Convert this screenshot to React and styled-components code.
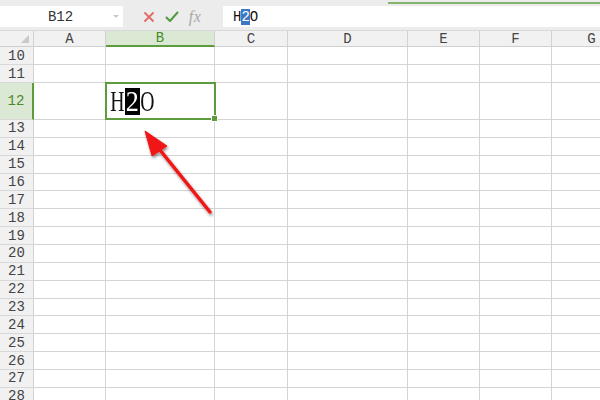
import React from "react";
import styled, { createGlobalStyle } from "styled-components";

const GlobalStyle = createGlobalStyle`
  html, body {
    margin: 0;
    padding: 0;
    background: #ffffff;
    overflow: hidden;
  }
  * {
    box-sizing: border-box;
  }
`;

const columns = [
  { key: "A", width: 72 },
  { key: "B", width: 109 },
  { key: "C", width: 73 },
  { key: "D", width: 120 },
  { key: "E", width: 72 },
  { key: "F", width: 72 },
  { key: "G", width: 80 },
];

const rows = [10, 11, 12, 13, 14, 15, 16, 17, 18, 19, 20, 21, 22, 23, 24, 25, 26, 27, 28];

const Page = styled.div`
  position: relative;
  width: 600px;
  height: 400px;
  overflow: hidden;
  font-family: "Liberation Mono", "DejaVu Sans Mono", monospace;
  background: #ffffff;
`;

const TopStrip = styled.div`
  height: 6px;
  background: #ececec;
  display: flex;
  align-items: flex-start;
  justify-content: flex-end;
`;

const TabLine = styled.div`
  width: 212px;
  height: 2px;
  margin-top: 2px;
  background: #84b56e;
`;

const FormulaBar = styled.div`
  display: flex;
  height: 21px;
  background: #ffffff;
`;

const NameBox = styled.div`
  position: relative;
  width: 123px;
  display: flex;
  align-items: center;
  justify-content: center;
  font-size: 14px;
  color: #333;
  padding-right: 2px;
`;

const DropArrow = styled.span`
  position: absolute;
  right: 4px;
  top: 9px;
  width: 0;
  height: 0;
  border-left: 3px solid transparent;
  border-right: 3px solid transparent;
  border-top: 3px solid #c8c8c8;
`;

const ToolZone = styled.div`
  width: 100px;
  background: #ececec;
  display: flex;
  align-items: center;
  justify-content: center;
  gap: 10px;
  padding-right: 2px;
`;

const Fx = styled.span`
  font-family: "Liberation Serif", serif;
  font-style: italic;
  font-size: 16px;
  color: #a8a8a8;
  letter-spacing: 0.5px;
`;

const FormulaInput = styled.div`
  flex: 1;
  display: flex;
  align-items: center;
  padding-left: 10px;
  font-size: 14px;
  color: #111;
`;

const Sel = styled.span`
  background: #3d78c6;
  color: #ffffff;
`;

const Gap = styled.div`
  height: 4px;
  background: #ececec;
  border-bottom: 1px solid #d8d8d8;
`;

const Sheet = styled.div`
  display: grid;
  grid-template-columns: 34px ${columns.map((c) => `${c.width}px`).join(" ")};
  grid-template-rows: 16px 18px 18px 37px repeat(16, 17.86px);
`;

const Corner = styled.div`
  position: relative;
  background: #f1f1f1;
  border-right: 1px solid #d2d2d2;
  border-bottom: 1px solid #cfcfcf;
  &::after {
    content: "";
    position: absolute;
    right: 4px;
    bottom: 3px;
    width: 0;
    height: 0;
    border-left: 8px solid transparent;
    border-bottom: 8px solid #c9c9c9;
  }
`;

const ColHead = styled.div`
  display: flex;
  align-items: center;
  justify-content: center;
  font-size: 14px;
  background: ${(p) => (p.$active ? "#dbe9d4" : "#f1f1f1")};
  color: ${(p) => (p.$active ? "#4a8a2e" : "#444")};
  border-right: 1px solid #d2d2d2;
  border-bottom: ${(p) => (p.$active ? "2px solid #5c9c3c" : "1px solid #cfcfcf")};
`;

const RowHead = styled.div`
  display: flex;
  align-items: center;
  justify-content: center;
  font-size: 14px;
  background: ${(p) => (p.$active ? "#dbe9d4" : "#f1f1f1")};
  color: ${(p) => (p.$active ? "#4a8a2e" : "#444")};
  border-right: ${(p) => (p.$active ? "2px solid #5c9c3c" : "1px solid #d2d2d2")};
  border-bottom: 1px solid #d8d8d8;
`;

const Cell = styled.div`
  border-right: 1px solid #d4d4d4;
  border-bottom: 1px solid #d4d4d4;
`;

const ActiveCell = styled.div`
  position: relative;
  margin: -1px -1px 0 -1px;
  border: 2px solid #5c9c3c;
  display: flex;
  align-items: center;
  padding-left: 3px;
  &::after {
    content: "";
    position: absolute;
    right: -4px;
    bottom: -4px;
    width: 5px;
    height: 5px;
    background: #5c9c3c;
    border: 1px solid #ffffff;
  }
`;

const BigText = styled.div`
  display: flex;
  font-family: "Liberation Serif", "Times New Roman", serif;
  font-size: 29px;
  line-height: 27px;
  color: #111;
`;

const Slot = styled.span`
  width: 15px;
  height: 27px;
  display: flex;
  justify-content: center;
  background: ${(p) => (p.$inv ? "#000000" : "transparent")};
  color: ${(p) => (p.$inv ? "#ffffff" : "#111111")};
`;

const Glyph = styled.span`
  display: inline-block;
  transform: scaleX(${(p) => p.$sx});
`;

const Overlay = styled.svg`
  position: absolute;
  left: 0;
  top: 0;
  pointer-events: none;
`;

const Cross = () => (
  <svg width="12" height="12" viewBox="0 0 12 12">
    <path d="M2 2 L10 10 M10 2 L2 10" stroke="#e06a66" strokeWidth="1.8" strokeLinecap="round" />
  </svg>
);

const Check = () => (
  <svg width="14" height="12" viewBox="0 0 14 12">
    <path d="M1.5 6.5 L5 10 L12.5 1.5" stroke="#4f9a3e" strokeWidth="2" fill="none" strokeLinecap="round" strokeLinejoin="round" />
  </svg>
);

const bigChars = [
  { ch: "H", sx: 0.68 },
  { ch: "2", sx: 0.9, inv: true },
  { ch: "O", sx: 0.68 },
];

export default function App() {
  return (
    <Page>
      <GlobalStyle />
      <TopStrip>
        <TabLine />
      </TopStrip>
      <FormulaBar>
        <NameBox>
          B12
          <DropArrow />
        </NameBox>
        <ToolZone>
          <Cross />
          <Check />
          <Fx>fx</Fx>
        </ToolZone>
        <FormulaInput>
          H<Sel>2</Sel>O
        </FormulaInput>
      </FormulaBar>
      <Gap />
      <Sheet>
        <Corner />
        {columns.map((c) => (
          <ColHead key={c.key} $active={c.key === "B"}>
            {c.key}
          </ColHead>
        ))}
        {rows.map((r) => {
          const active = r === 12;
          return (
            <React.Fragment key={r}>
              <RowHead $active={active}>{r}</RowHead>
              {columns.map((c) =>
                active && c.key === "B" ? (
                  <ActiveCell key={c.key}>
                    <BigText>
                      {bigChars.map((g, i) => (
                        <Slot key={i} $inv={g.inv}>
                          <Glyph $sx={g.sx}>{g.ch}</Glyph>
                        </Slot>
                      ))}
                    </BigText>
                  </ActiveCell>
                ) : (
                  <Cell key={c.key} />
                )
              )}
            </React.Fragment>
          );
        })}
      </Sheet>
      <Overlay width="600" height="400" viewBox="0 0 600 400">
        <defs>
          <filter id="sh" x="-20%" y="-20%" width="140%" height="140%">
            <feGaussianBlur in="SourceAlpha" stdDeviation="1.5" />
            <feOffset dx="1" dy="1.5" result="b" />
            <feComponentTransfer>
              <feFuncA type="linear" slope="0.45" />
            </feComponentTransfer>
            <feMerge>
              <feMergeNode />
              <feMergeNode in="SourceGraphic" />
            </feMerge>
          </filter>
        </defs>
        <g filter="url(#sh)" fill="#f01818" stroke="#f01818">
          <line x1="160" y1="150" x2="210" y2="212" strokeWidth="3.5" strokeLinecap="round" />
          <polygon points="145,131 152,156 167,146" strokeWidth="1" strokeLinejoin="round" />
        </g>
      </Overlay>
    </Page>
  );
}
